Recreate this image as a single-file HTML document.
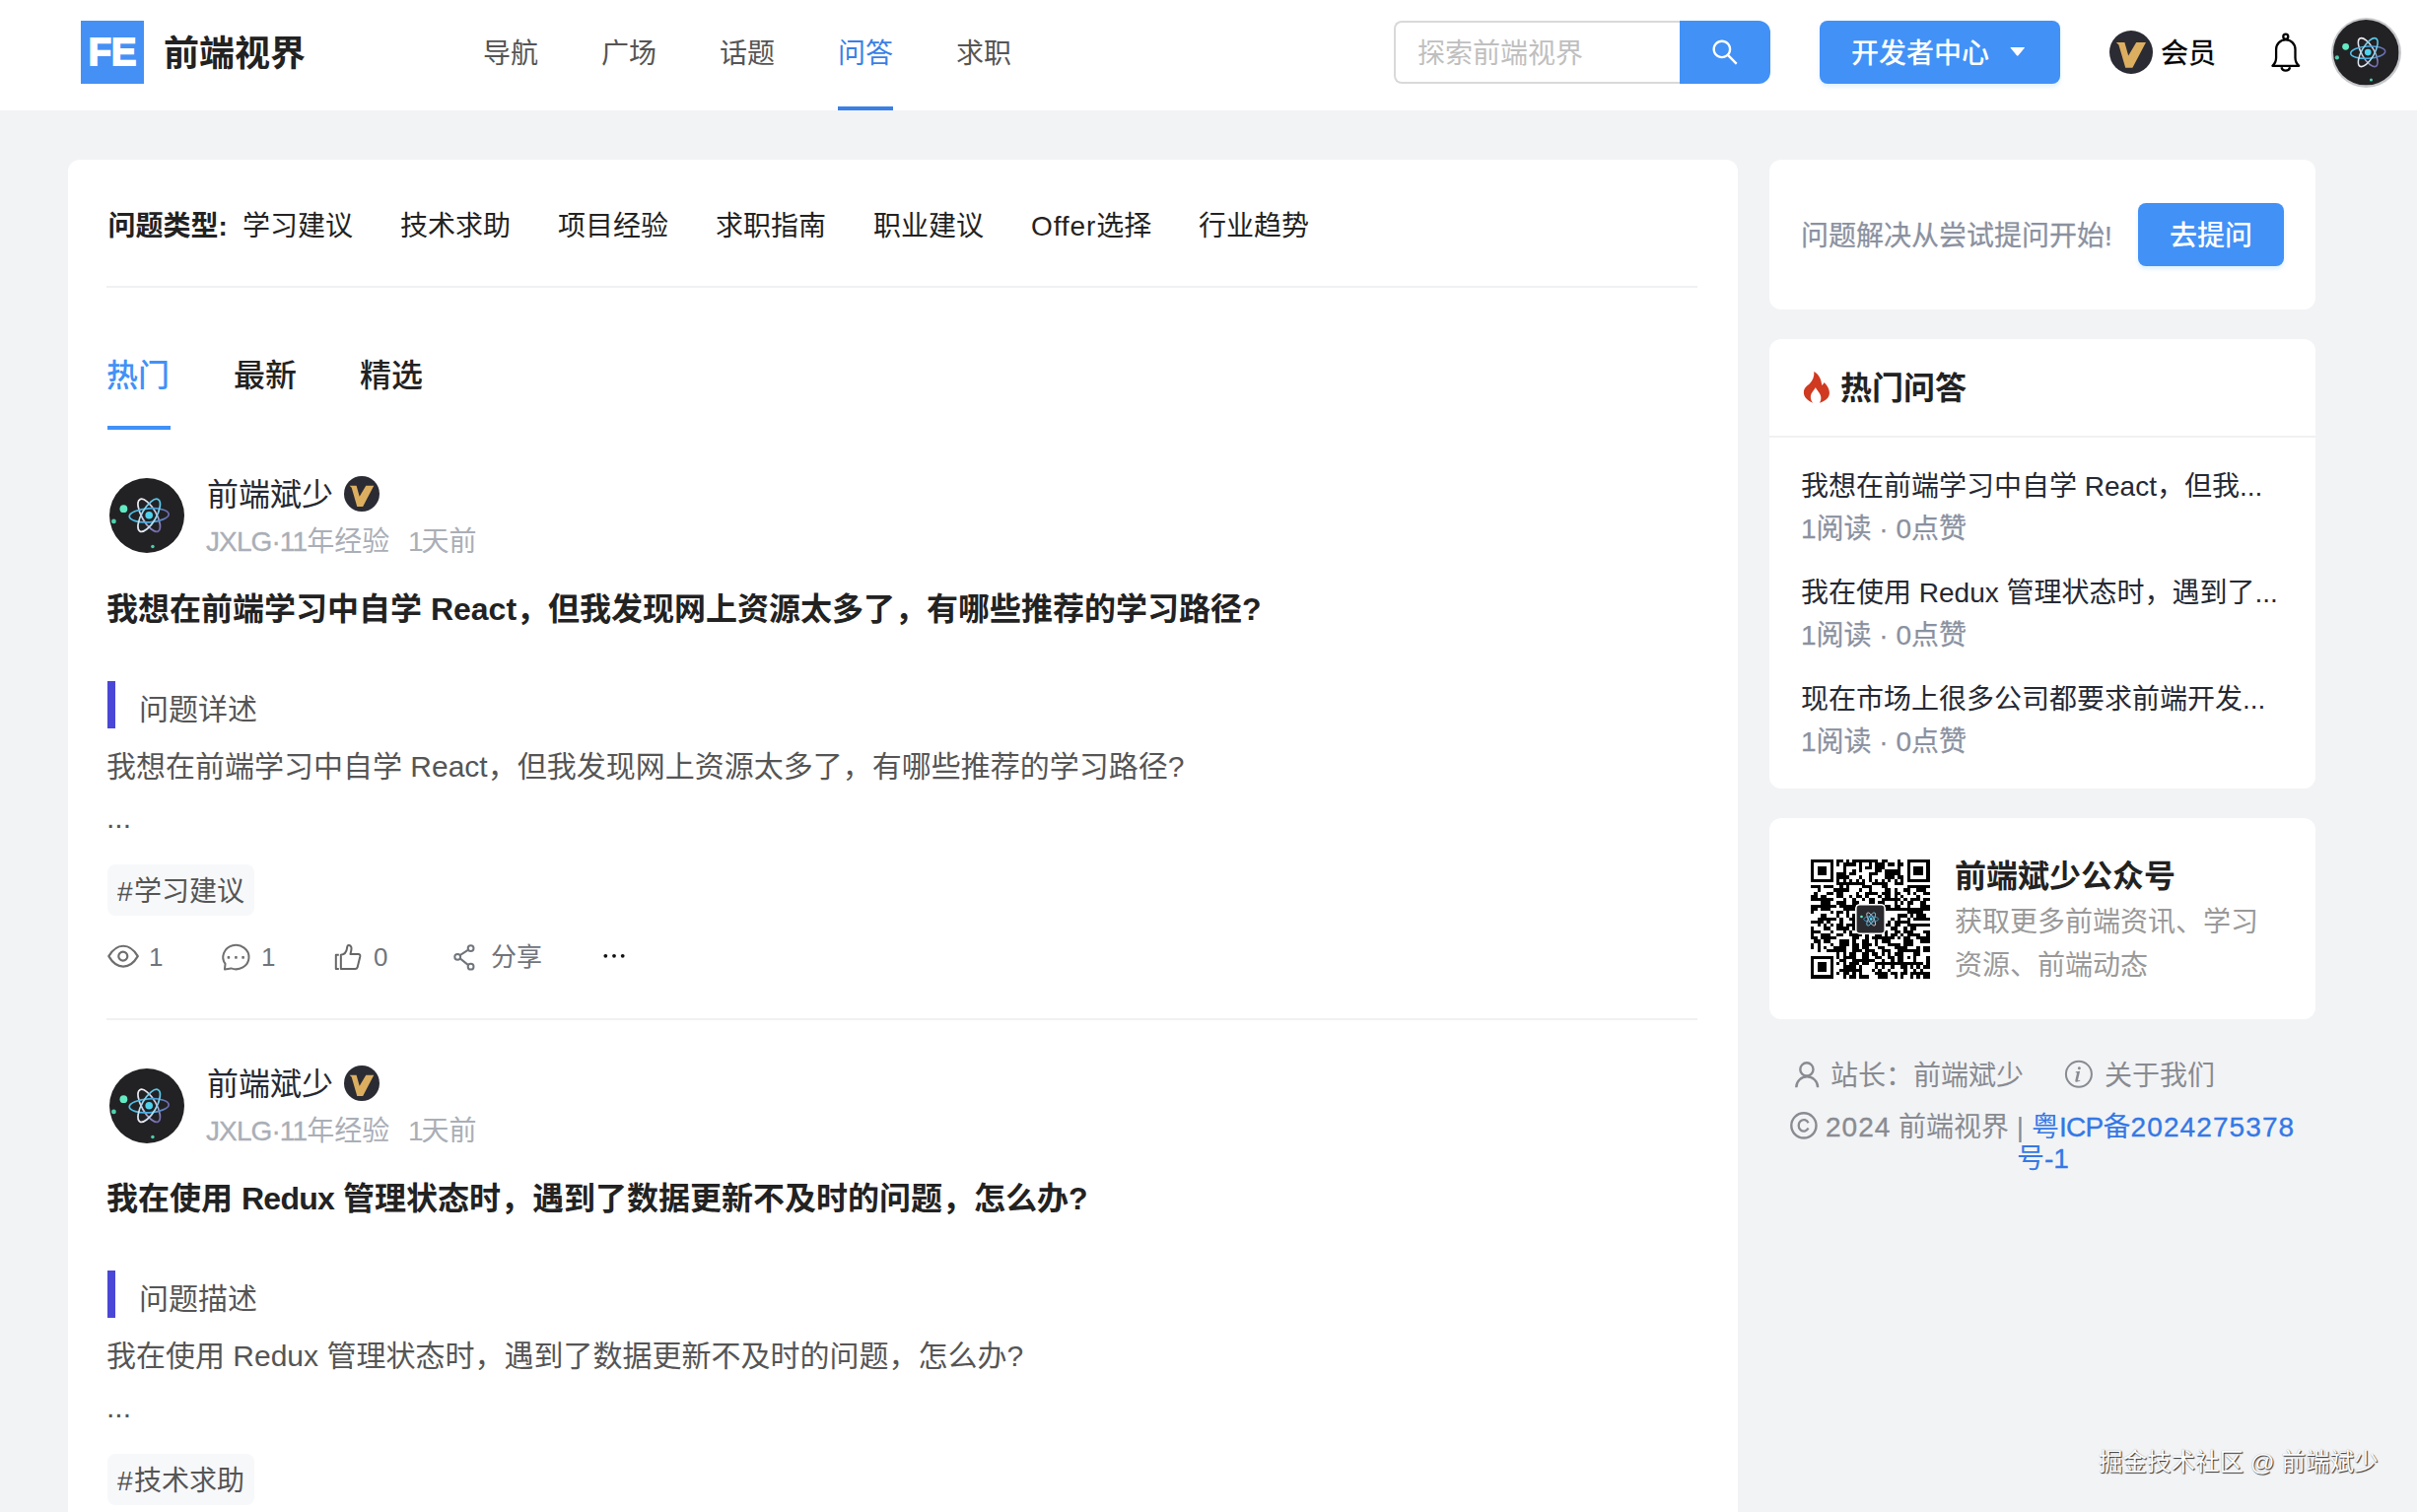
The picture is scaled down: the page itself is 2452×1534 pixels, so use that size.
<!DOCTYPE html>
<html lang="zh-CN">
<head>
<meta charset="utf-8">
<title>前端视界 - 问答</title>
<style>
*{box-sizing:border-box;margin:0;padding:0}
html,body{width:2452px;height:1534px;overflow:hidden;background:#f2f3f5}
body{position:relative;font-family:"Liberation Sans","Noto Sans CJK SC",sans-serif;color:#252933;font-size:28px}
.abs{position:absolute;white-space:nowrap}
.t{position:absolute;white-space:nowrap;line-height:40px;height:40px}
svg{display:block;overflow:visible}
.ico{position:absolute}
#hd{position:absolute;left:0;top:0;width:2452px;height:112px;background:#fff}
#logo{left:82px;top:21px;width:64px;height:64px;background:#4590f5;color:#fff;font-weight:bold;font-size:38px;line-height:65px;text-align:center;-webkit-text-stroke:1.800px #fff}
#brand{left:166px;top:32px;font-size:36px;font-weight:bold;line-height:46px;color:#222}
.nav{font-size:28px;color:#555;top:35px}
.nav.on{color:#3a7fe6}
#navline{left:850px;top:108px;width:56px;height:4px;background:#3a7fe6}
#search{left:1414px;top:21px;width:292px;height:64px;border:2px solid #d9d9d9;border-right:none;border-radius:8px 0 0 8px;background:#fff}
#sbtn{left:1704px;top:21px;width:92px;height:64px;background:#4191f7;border-radius:0 12px 12px 0}
#ph{left:1438px;top:35px;color:#bfbfbf;font-size:28px}
#dev{left:1846px;top:21px;width:244px;height:64px;background:#4191f7;border-radius:8px;box-shadow:0 3px 4px rgba(5,145,255,.13)}
#devt{left:1878px;top:35px;color:#fff;font-size:28px;font-weight:500}
#vipt{left:2192px;top:35px;color:#000;font-size:28px;-webkit-text-stroke:.3px}
.card{position:absolute;background:#fff;border-radius:12px}
#main{left:68.500px;top:162px;width:1694px;height:1500px}
.hr{position:absolute;height:2px;background:#f0f1f2}
.cat{font-size:28px;color:#222;top:210px}
.tab{font-size:32px;top:359px;line-height:44px;height:44px;color:#222;font-weight:500}
.tab.on{color:#4191f7}
.post{position:absolute;left:0;width:2452px;height:600px}
.ava{left:111px;top:0;width:76px;height:76px}
.name{left:210px;top:-5px;font-size:32px;line-height:44px;height:44px;color:#252933}
.vb{left:349px;top:-2px;width:36px;height:36px}
.sub{left:209px;top:45px;font-size:28px;color:#aaaeb6}
.ttl{left:108px;top:111px;font-size:32px;font-weight:bold;line-height:44px;height:44px;color:#222}
.bar{position:absolute;left:109px;top:206px;width:8px;height:48px;background:#4a47d6}
.q{left:141px;top:215px;font-size:30px;color:#555}
.body{left:108px;top:273px;font-size:30px;color:#555}
.dots{left:108px;top:325px;font-size:30px;color:#555}
.tag{position:absolute;left:109px;top:392px;width:149px;height:52px;border-radius:8px;background:#f7f8fa}
.tagt{left:119px;top:400px;font-size:28px;color:#555}
.act{font-size:26px;color:#70747b;top:466px}
.g{color:#8a919f;-webkit-text-stroke:.25px}
.lk{color:#3478e5}
.lk span,.st{-webkit-text-stroke:.35px}
.fg{color:#888b91}
.ls{letter-spacing:-.9px;-webkit-text-stroke:.3px}
.hs{letter-spacing:1.500px}
@media (max-width:1400px){html{zoom:.5}}
</style>
</head>
<body>
<svg width="0" height="0" style="position:absolute"><symbol id="atom" viewBox="0 0 76 76">
<defs>
<linearGradient id="ga" x1="0" y1="0" x2="1" y2="0"><stop offset="0" stop-color="#ececf4"/><stop offset=".55" stop-color="#8fd6ee"/><stop offset="1" stop-color="#55c6ea"/></linearGradient>
<linearGradient id="gb" x1="0" y1="0" x2="1" y2="0"><stop offset="0" stop-color="#f0f0f6"/><stop offset=".5" stop-color="#c9c6e4"/><stop offset="1" stop-color="#7168ae"/></linearGradient>
<linearGradient id="gc" x1="0" y1="0" x2="1" y2="0"><stop offset="0" stop-color="#52c4ee"/><stop offset=".6" stop-color="#46a6dc"/><stop offset="1" stop-color="#6f68ae"/></linearGradient>
</defs>
<circle cx="38" cy="38" r="38" fill="#222224"/>
<g fill="none" stroke-width="1.750" transform="translate(40.200 37.800)">
<ellipse rx="18.600" ry="7.300" stroke="url(#gb)" transform="rotate(60)"/>
<ellipse rx="20" ry="7" stroke="url(#gc)" transform="rotate(-3.500)"/>
<ellipse rx="18.600" ry="7.300" stroke="url(#ga)" transform="rotate(-60)"/>
<circle r="3.800" fill="#4fd2ee" stroke="none"/>
</g>
<circle cx="14.4" cy="31.2" r="3.9" fill="#62ebc4"/>
<circle cx="4.400" cy="43.900" r="2.400" fill="#4fd0ac"/>
<circle cx="43.900" cy="69.600" r="1.750" fill="#4ccfb0"/>
</symbol><symbol id="vb" viewBox="0 0 44 44"><circle cx="22" cy="22" r="22" fill="#2b2b34"/><path d="M6.900 12H15.400L19.200 25.500L27.200 12H37L23.400 37.800H16.200L9.400 14.500Z" fill="#dcae60"/></symbol></svg>
<div id="hd"></div>
<div id="logo" class="abs">FE</div>
<div id="brand" class="abs">前端视界</div>
<div class="t nav" style="left:490px">导航</div>
<div class="t nav" style="left:610px">广场</div>
<div class="t nav" style="left:730px">话题</div>
<div class="t nav on" style="left:850px">问答</div>
<div class="t nav" style="left:970px">求职</div>
<div id="navline" class="abs"></div>
<div id="search" class="abs"></div>
<div id="ph" class="t">探索前端视界</div>
<div id="sbtn" class="abs"></div>
<svg class="ico" style="left:1736px;top:39px" width="28" height="28" viewBox="64 64 896 896"><path fill="#fff" d="M909.6 854.5L649.9 594.8C690.2 542.7 712 479 712 412c0-80.2-31.3-155.4-87.9-212.1-56.6-56.7-132-87.9-212.1-87.9s-155.5 31.3-212.1 87.9C143.2 256.5 112 331.8 112 412c0 80.1 31.3 155.5 87.9 212.1C256.5 680.8 331.8 712 412 712c67 0 130.600-21.8 182.7-62l259.700 259.600a8.200 8.200 0 0011.600 0l43.600-43.500a8.200 8.200 0 000-11.600zM570.4 570.4C528 612.7 471.8 636 412 636s-116-23.300-158.400-65.600C211.300 528 188 471.800 188 412s23.300-116.100 65.600-158.400C296 211.300 352.200 188 412 188s116.100 23.200 158.400 65.600S636 352.200 636 412s-23.300 116.100-65.600 158.400z"/></svg>
<div id="dev" class="abs"></div>
<div id="devt" class="t">开发者中心</div>
<svg class="ico" style="left:2038.500px;top:46.500px" width="15.500" height="10" viewBox="0 0 17 11"><path d="M1.200 1h14.600q1.100 0 .4 .9l-6.800 8.200q-.9 1-1.800 0L.8 1.900Q.1 1 1.200 1z" fill="#fff"/></svg>
<svg class="ico" style="left:2140px;top:31px" width="44" height="44"><use href="#vb"/></svg>
<div id="vipt" class="t">会员</div>
<svg class="ico" style="left:2300px;top:31px" width="40" height="46" viewBox="2300 30 40 46" fill="none" stroke="#000" stroke-width="2.300" stroke-linejoin="round"><path d="M2305.400 65.800C2308 63.500 2309.100 61 2309.100 57.500V49A9.700 9.700 0 0 1 2328.500 49V57.500C2328.500 61 2329.600 63.500 2332.200 65.800Z"/><circle cx="2318.800" cy="36.200" r="2.500"/><path d="M2314.500 67.200A4.400 4.400 0 0 0 2323.100 67.200"/></svg>
<div class="abs" style="left:2365px;top:17.500px;width:71px;height:71px;border-radius:50%;background:#c6c8cb"></div>
<svg class="ico" style="left:2367.200px;top:19.700px" width="66.600" height="66.600"><use href="#atom"/></svg>

<div id="main" class="card"></div>
<div class="t cat" style="left:109.500px;font-weight:bold">问题类型:</div>
<div class="t cat" style="left:246px">学习建议</div>
<div class="t cat" style="left:406px">技术求助</div>
<div class="t cat" style="left:566px">项目经验</div>
<div class="t cat" style="left:726px">求职指南</div>
<div class="t cat" style="left:886px">职业建议</div>
<div class="t cat" style="left:1046px"><span style="letter-spacing:.9px">Offer</span>选择</div>
<div class="t cat" style="left:1216px">行业趋势</div>
<div class="hr" style="left:108px;top:290px;width:1614px"></div>
<div class="t tab on" style="left:108px">热门</div>
<div class="t tab" style="left:237px">最新</div>
<div class="t tab" style="left:365px">精选</div>
<div class="abs" style="left:109px;top:432px;width:64px;height:4px;background:#4191f7"></div>

<div class="post" style="top:485px">
  <svg class="ico ava"><use href="#atom"/></svg>
  <div class="t name">前端斌少</div>
  <svg class="ico vb"><use href="#vb"/></svg>
  <div class="t sub"><span class="ls">JXLG·11</span>年经验</div>
  <div class="t sub" style="left:414px"><span style="letter-spacing:-2px">1</span>天前</div>
  <div class="t ttl">我想在前端学习中自学 React，但我发现网上资源太多了，有哪些推荐的学习路径?</div>
  <div class="bar"></div>
  <div class="t q">问题详述</div>
  <div class="t body">我想在前端学习中自学 React，但我发现网上资源太多了，有哪些推荐的学习路径?</div>
  <div class="t dots">...</div>
  <div class="tag"></div>
  <div class="t tagt"><span class="hs">#</span>学习建议</div>
  <svg class="ico" style="left:109px;top:469px" width="32" height="32" viewBox="-16 -16 32 32" fill="none" stroke="#6e6e6e" stroke-width="2.200" stroke-linejoin="round"><path d="M-14.700 .15C-10.500 -7 -5.500 -10.250 .05 -10.250C5.600 -10.250 10.600 -7 14.800 .15C10.600 7.300 5.600 10.550 .05 10.550C-5.500 10.550 -10.500 7.300 -14.700 .15Z"/><circle cx="-.2" cy=".15" r="4.500"/></svg>
  <div class="t act" style="left:151px">1</div>
  <svg class="ico" style="left:224px;top:471px" width="32" height="32" viewBox="0 0 32 32"><path d="M4.54 21.92L3.9 27.4L10.49 26.41A13.1 12.2 0 1 0 4.54 21.92Z" fill="none" stroke="#707070" stroke-width="2" stroke-linejoin="round"/><g fill="#707070"><rect x="6.600" y="14.100" width="2.600" height="2.600" rx=".6"/><rect x="14.100" y="14.100" width="2.600" height="2.600" rx=".6"/><rect x="21.300" y="14.100" width="2.600" height="2.600" rx=".6"/></g></svg>
  <div class="t act" style="left:265px">1</div>
  <svg class="ico" style="left:338px;top:471px" width="32" height="32" viewBox="0 0 32 32" fill="none" stroke="#666" stroke-width="2" stroke-linejoin="round"><path d="M5.800 12.800H2.800V27H5.800"/><path d="M7.850 27V12.800C11.500 12.300 13.600 9.300 14 6.100C14.200 3.800 15 3 15.700 3C17.500 3 18.800 4.600 18.500 6.500C18.400 9 17.600 11 17.500 12.100H25.500Q27.700 12.100 27.300 14.400L24.600 25.400Q24.100 27 22.400 27Z"/></svg>
  <div class="t act" style="left:379px">0</div>
  <svg class="ico" style="left:458px;top:469px" width="32" height="32" viewBox="458 954 32 32" fill="none" stroke="#70747b" stroke-width="2"><path d="M475.100 963.700L466.700 969.200M466.700 972.400L475.100 979.100"/><circle cx="477.600" cy="962.100" r="2.900"/><circle cx="464.200" cy="970.800" r="2.900"/><circle cx="477.600" cy="980.700" r="2.900"/></svg>
  <div class="t act" style="left:498px">分享</div>
  <svg class="ico" style="left:610px;top:480px" width="26" height="8" viewBox="0 0 26 8"><g fill="#111"><circle cx="4.300" cy="4.800" r="1.900"/><circle cx="13" cy="4.800" r="1.900"/><circle cx="21.700" cy="4.800" r="1.900"/></g></svg>
</div>
<div class="hr" style="left:108px;top:1033px;width:1614px"></div>
<div class="post" style="top:1083px">
  <svg class="ico ava" style="top:1px"><use href="#atom"/></svg>
  <div class="t name">前端斌少</div>
  <svg class="ico vb"><use href="#vb"/></svg>
  <div class="t sub"><span class="ls">JXLG·11</span>年经验</div>
  <div class="t sub" style="left:414px"><span style="letter-spacing:-2px">1</span>天前</div>
  <div class="t ttl">我在使用 <span style="letter-spacing:-.7px">Redux</span> 管理状态时，遇到了数据更新不及时的问题，怎么办?</div>
  <div class="bar"></div>
  <div class="t q">问题描述</div>
  <div class="t body">我在使用 Redux 管理状态时，遇到了数据更新不及时的问题，怎么办?</div>
  <div class="t dots">...</div>
  <div class="tag"></div>
  <div class="t tagt"><span class="hs">#</span>技术求助</div>
</div>

<div class="card" style="left:1794.600px;top:162px;width:554px;height:152px"></div>
<div class="t g" style="left:1827px;top:220px">问题解决从尝试提问开始!</div>
<div class="abs" style="left:2169px;top:206px;width:148px;height:64px;border-radius:8px;background:#4191f7;box-shadow:0 3px 4px rgba(5,145,255,.13)"></div>
<div class="t" style="left:2201px;top:220px;color:#fff;font-weight:500">去提问</div>

<div class="card" style="left:1794.600px;top:344px;width:554px;height:456px"></div>
<svg class="ico" style="left:1829px;top:376px" width="28" height="34" viewBox="0 0 28 34"><path d="M11.32 0.91C15.78 3.15 18.76 8.36 19.32 15.06C20.25 13.94 21.18 12.83 21.74 11.90C24.72 15.06 26.95 18.78 26.95 22.51C26.95 27.35 22.86 31.07 16.90 32.63C19.51 28.46 18.39 24.37 15.78 21.39C14.67 19.90 13.55 18.78 12.88 17.11C12.06 19.16 9.83 21.02 8.52 23.62C7.22 26.60 7.78 29.95 10.01 32.63C4.62 30.33 0.89 26.60 0.89 22.13C0.89 17.67 3.87 15.81 6.85 13.20C9.83 10.22 11.69 6.13 11.32 0.91Z" fill="#cf3a21"/></svg>
<div class="t" style="left:1867px;top:372px;font-size:32px;font-weight:bold;line-height:44px;height:44px;color:#222">热门问答</div>
<div class="hr" style="left:1795px;top:442px;width:554px"></div>
<div class="t" style="left:1827px;top:474px">我想在前端学习中自学 React，但我...</div>
<div class="t g" style="left:1827px;top:517px">1阅读 · 0点赞</div>
<div class="t" style="left:1827px;top:582px">我在使用 Redux 管理状态时，遇到了...</div>
<div class="t g" style="left:1827px;top:625px">1阅读 · 0点赞</div>
<div class="t" style="left:1827px;top:690px">现在市场上很多公司都要求前端开发...</div>
<div class="t g" style="left:1827px;top:733px">1阅读 · 0点赞</div>

<div class="card" style="left:1794.600px;top:830px;width:554px;height:204px"></div>
<svg class="ico" style="left:1837px;top:872px" width="120.500" height="120.500" viewBox="0 0 37 37" shape-rendering="crispEdges"><path d="M0 0h7v1h-7zM8 0h2v1h-2zM11 0h1v1h-1zM13 0h8v1h-8zM22 0h2v1h-2zM27 0h1v1h-1zM30 0h7v1h-7zM0 1h1v1h-1zM6 1h1v1h-1zM8 1h1v1h-1zM10 1h4v1h-4zM15 1h1v1h-1zM18 1h1v1h-1zM20 1h3v1h-3zM24 1h2v1h-2zM27 1h2v1h-2zM30 1h1v1h-1zM36 1h1v1h-1zM0 2h1v1h-1zM2 2h3v1h-3zM6 2h1v1h-1zM10 2h1v1h-1zM15 2h1v1h-1zM17 2h2v1h-2zM20 2h3v1h-3zM27 2h1v1h-1zM30 2h1v1h-1zM32 2h3v1h-3zM36 2h1v1h-1zM0 3h1v1h-1zM2 3h3v1h-3zM6 3h1v1h-1zM10 3h1v1h-1zM13 3h1v1h-1zM15 3h1v1h-1zM20 3h2v1h-2zM23 3h5v1h-5zM30 3h1v1h-1zM32 3h3v1h-3zM36 3h1v1h-1zM0 4h1v1h-1zM2 4h3v1h-3zM6 4h1v1h-1zM8 4h3v1h-3zM12 4h2v1h-2zM18 4h3v1h-3zM23 4h5v1h-5zM30 4h1v1h-1zM32 4h3v1h-3zM36 4h1v1h-1zM0 5h1v1h-1zM6 5h1v1h-1zM8 5h4v1h-4zM15 5h1v1h-1zM18 5h1v1h-1zM23 5h3v1h-3zM27 5h2v1h-2zM30 5h1v1h-1zM36 5h1v1h-1zM0 6h7v1h-7zM8 6h1v1h-1zM10 6h1v1h-1zM12 6h1v1h-1zM14 6h1v1h-1zM16 6h1v1h-1zM18 6h1v1h-1zM20 6h1v1h-1zM22 6h1v1h-1zM24 6h1v1h-1zM26 6h1v1h-1zM28 6h1v1h-1zM30 6h7v1h-7zM8 7h9v1h-9zM19 7h5v1h-5zM26 7h3v1h-3zM0 8h3v1h-3zM4 8h3v1h-3zM9 8h1v1h-1zM11 8h1v1h-1zM16 8h3v1h-3zM22 8h2v1h-2zM30 8h7v1h-7zM2 9h1v1h-1zM7 9h5v1h-5zM15 9h1v1h-1zM18 9h1v1h-1zM23 9h2v1h-2zM26 9h1v1h-1zM29 9h2v1h-2zM33 9h3v1h-3zM1 10h1v1h-1zM5 10h2v1h-2zM8 10h2v1h-2zM14 10h1v1h-1zM17 10h4v1h-4zM22 10h3v1h-3zM26 10h2v1h-2zM30 10h1v1h-1zM32 10h1v1h-1zM35 10h2v1h-2zM0 11h2v1h-2zM3 11h2v1h-2zM8 11h2v1h-2zM12 11h1v1h-1zM14 11h2v1h-2zM17 11h1v1h-1zM21 11h1v1h-1zM23 11h2v1h-2zM26 11h1v1h-1zM28 11h1v1h-1zM33 11h1v1h-1zM0 12h7v1h-7zM10 12h1v1h-1zM13 12h1v1h-1zM16 12h1v1h-1zM18 12h2v1h-2zM22 12h6v1h-6zM29 12h1v1h-1zM31 12h3v1h-3zM35 12h2v1h-2zM3 13h3v1h-3zM8 13h3v1h-3zM13 13h2v1h-2zM18 13h2v1h-2zM21 13h2v1h-2zM26 13h1v1h-1zM28 13h1v1h-1zM30 13h2v1h-2zM34 13h2v1h-2zM0 14h8v1h-8zM9 14h5v1h-5zM23 14h2v1h-2zM26 14h2v1h-2zM30 14h1v1h-1zM34 14h3v1h-3zM0 15h2v1h-2zM3 15h3v1h-3zM10 15h4v1h-4zM23 15h14v1h-14zM0 16h1v1h-1zM6 16h1v1h-1zM8 16h2v1h-2zM11 16h1v1h-1zM30 16h5v1h-5zM3 17h2v1h-2zM8 17h1v1h-1zM11 17h1v1h-1zM13 17h1v1h-1zM27 17h3v1h-3zM31 17h1v1h-1zM33 17h3v1h-3zM2 18h6v1h-6zM9 18h1v1h-1zM12 18h2v1h-2zM25 18h1v1h-1zM27 18h1v1h-1zM30 18h1v1h-1zM32 18h5v1h-5zM0 19h4v1h-4zM5 19h1v1h-1zM9 19h1v1h-1zM13 19h1v1h-1zM24 19h1v1h-1zM26 19h5v1h-5zM2 20h1v1h-1zM4 20h1v1h-1zM6 20h1v1h-1zM8 20h2v1h-2zM11 20h3v1h-3zM23 20h2v1h-2zM26 20h2v1h-2zM30 20h7v1h-7zM0 21h1v1h-1zM4 21h2v1h-2zM8 21h4v1h-4zM13 21h1v1h-1zM25 21h2v1h-2zM29 21h1v1h-1zM31 21h2v1h-2zM0 22h3v1h-3zM6 22h1v1h-1zM10 22h1v1h-1zM12 22h1v1h-1zM23 22h1v1h-1zM26 22h2v1h-2zM29 22h3v1h-3zM35 22h2v1h-2zM0 23h1v1h-1zM3 23h3v1h-3zM8 23h2v1h-2zM12 23h4v1h-4zM17 23h1v1h-1zM20 23h2v1h-2zM23 23h1v1h-1zM25 23h2v1h-2zM28 23h1v1h-1zM30 23h4v1h-4zM36 23h1v1h-1zM0 24h2v1h-2zM3 24h5v1h-5zM13 24h2v1h-2zM17 24h1v1h-1zM19 24h7v1h-7zM27 24h1v1h-1zM29 24h2v1h-2zM33 24h4v1h-4zM1 25h2v1h-2zM4 25h2v1h-2zM9 25h3v1h-3zM13 25h1v1h-1zM16 25h2v1h-2zM20 25h1v1h-1zM22 25h3v1h-3zM29 25h3v1h-3zM34 25h3v1h-3zM0 26h1v1h-1zM2 26h1v1h-1zM6 26h1v1h-1zM9 26h3v1h-3zM13 26h2v1h-2zM16 26h3v1h-3zM20 26h1v1h-1zM24 26h4v1h-4zM29 26h3v1h-3zM0 27h1v1h-1zM2 27h1v1h-1zM4 27h1v1h-1zM7 27h4v1h-4zM13 27h2v1h-2zM16 27h2v1h-2zM21 27h2v1h-2zM26 27h4v1h-4zM33 27h1v1h-1zM35 27h2v1h-2zM2 28h1v1h-1zM5 28h6v1h-6zM13 28h3v1h-3zM17 28h3v1h-3zM22 28h3v1h-3zM27 28h7v1h-7zM35 28h2v1h-2zM8 29h1v1h-1zM10 29h1v1h-1zM12 29h2v1h-2zM16 29h2v1h-2zM19 29h2v1h-2zM22 29h1v1h-1zM24 29h1v1h-1zM26 29h3v1h-3zM32 29h2v1h-2zM0 30h7v1h-7zM8 30h1v1h-1zM10 30h4v1h-4zM16 30h2v1h-2zM20 30h2v1h-2zM24 30h2v1h-2zM27 30h2v1h-2zM30 30h1v1h-1zM32 30h1v1h-1zM36 30h1v1h-1zM0 31h1v1h-1zM6 31h1v1h-1zM9 31h2v1h-2zM13 31h7v1h-7zM22 31h1v1h-1zM25 31h1v1h-1zM27 31h2v1h-2zM32 31h1v1h-1zM36 31h1v1h-1zM0 32h1v1h-1zM2 32h3v1h-3zM6 32h1v1h-1zM8 32h1v1h-1zM10 32h1v1h-1zM12 32h3v1h-3zM16 32h2v1h-2zM20 32h15v1h-15zM36 32h1v1h-1zM0 33h1v1h-1zM2 33h3v1h-3zM6 33h1v1h-1zM10 33h4v1h-4zM15 33h1v1h-1zM20 33h1v1h-1zM22 33h1v1h-1zM25 33h1v1h-1zM28 33h2v1h-2zM31 33h1v1h-1zM33 33h1v1h-1zM35 33h2v1h-2zM0 34h1v1h-1zM2 34h3v1h-3zM6 34h1v1h-1zM9 34h7v1h-7zM19 34h1v1h-1zM21 34h1v1h-1zM24 34h1v1h-1zM29 34h1v1h-1zM32 34h1v1h-1zM34 34h1v1h-1zM0 35h1v1h-1zM6 35h1v1h-1zM8 35h1v1h-1zM10 35h2v1h-2zM13 35h1v1h-1zM15 35h1v1h-1zM20 35h4v1h-4zM25 35h2v1h-2zM28 35h2v1h-2zM31 35h6v1h-6zM0 36h7v1h-7zM10 36h1v1h-1zM12 36h2v1h-2zM15 36h3v1h-3zM21 36h3v1h-3zM26 36h1v1h-1zM28 36h1v1h-1zM31 36h1v1h-1zM33 36h1v1h-1zM35 36h2v1h-2z" fill="#000"/></svg>
<svg class="ico" style="left:1881.500px;top:916.500px" width="31" height="31" viewBox="0 0 31 31"><rect x=".8" y=".8" width="29.400" height="29.400" rx="4" fill="#2a2a2e" stroke="#fff" stroke-width="1.600"/><g fill="none" stroke-width=".8" transform="translate(16.200 15.500)"><ellipse rx="7.500" ry="2.700" stroke="#d8d8e8" transform="rotate(60)"/><ellipse rx="7.500" ry="2.700" stroke="#46ace2"/><ellipse rx="7.500" ry="2.700" stroke="#6fd0ee" transform="rotate(120)"/><circle r="1.400" fill="#4fd2ee" stroke="none"/></g><circle cx="6.500" cy="13" r="1.300" fill="#62ebc4"/></svg>
<div class="t" style="left:1983px;top:867px;font-size:32px;font-weight:bold;line-height:44px;height:44px;color:#222">前端斌少公众号</div>
<div class="t" style="left:1983px;top:916px;color:#999">获取更多前端资讯、学习</div>
<div class="t" style="left:1983px;top:960px;color:#999">资源、前端动态</div>

<svg class="ico" style="left:1818px;top:1074px" width="30" height="32" viewBox="1818 1074 30 32" fill="none" stroke="#888b91" stroke-width="2.400"><circle cx="1832.900" cy="1084.900" r="6.600"/><path d="M1822.300 1103.200A10.900 10.900 0 0 1 1844.100 1103.200"/></svg>
<div class="t fg" style="left:1857px;top:1072px">站长：前端斌少</div>
<svg class="ico" style="left:2094px;top:1075px" width="30" height="30" viewBox="0 0 30 30"><circle cx="14.900" cy="14.800" r="13" fill="none" stroke="#888b91" stroke-width="2"/><path d="M15.300 7.300a1.500 1.500 0 1 0 .1 0zM11.800 12.300l4.300-.6-2 8.600q-.2 1.100 .8 .9l1.300-.4v1l-3.600 .9q-1.700 .2-1.300-1.500l1.700-7.400q.1-.6-.5-.6h-.9z" fill="#888b91"/></svg>
<div class="t fg" style="left:2135px;top:1072px">关于我们</div>
<svg class="ico" style="left:1815px;top:1127px" width="30" height="30" viewBox="0 0 30 30" fill="none" stroke="#888b91" stroke-width="2.400"><circle cx="14.900" cy="14.900" r="12.600"/><path d="M19.500 12.200A5.200 5.800 0 1 0 19.500 17.600" stroke-width="2.300"/></svg>
<div class="t fg" style="left:1852px;top:1124px"><span class="st" style="letter-spacing:1px">2024</span> 前端视界 | <span class="lk">粤<span style="letter-spacing:-.7px">ICP</span>备<span style="letter-spacing:1.100px">2024275378</span></span></div>
<div class="t lk" style="left:2046px;top:1156px">号<span>-1</span></div>

<div class="t" style="left:2129px;top:1464px;font-size:24.500px;color:#fff;text-shadow:1px 1px 1px rgba(0,0,0,.8),0 0 1px rgba(0,0,0,.35)">掘金技术社区 @ 前端斌少</div>
</body>
</html>
